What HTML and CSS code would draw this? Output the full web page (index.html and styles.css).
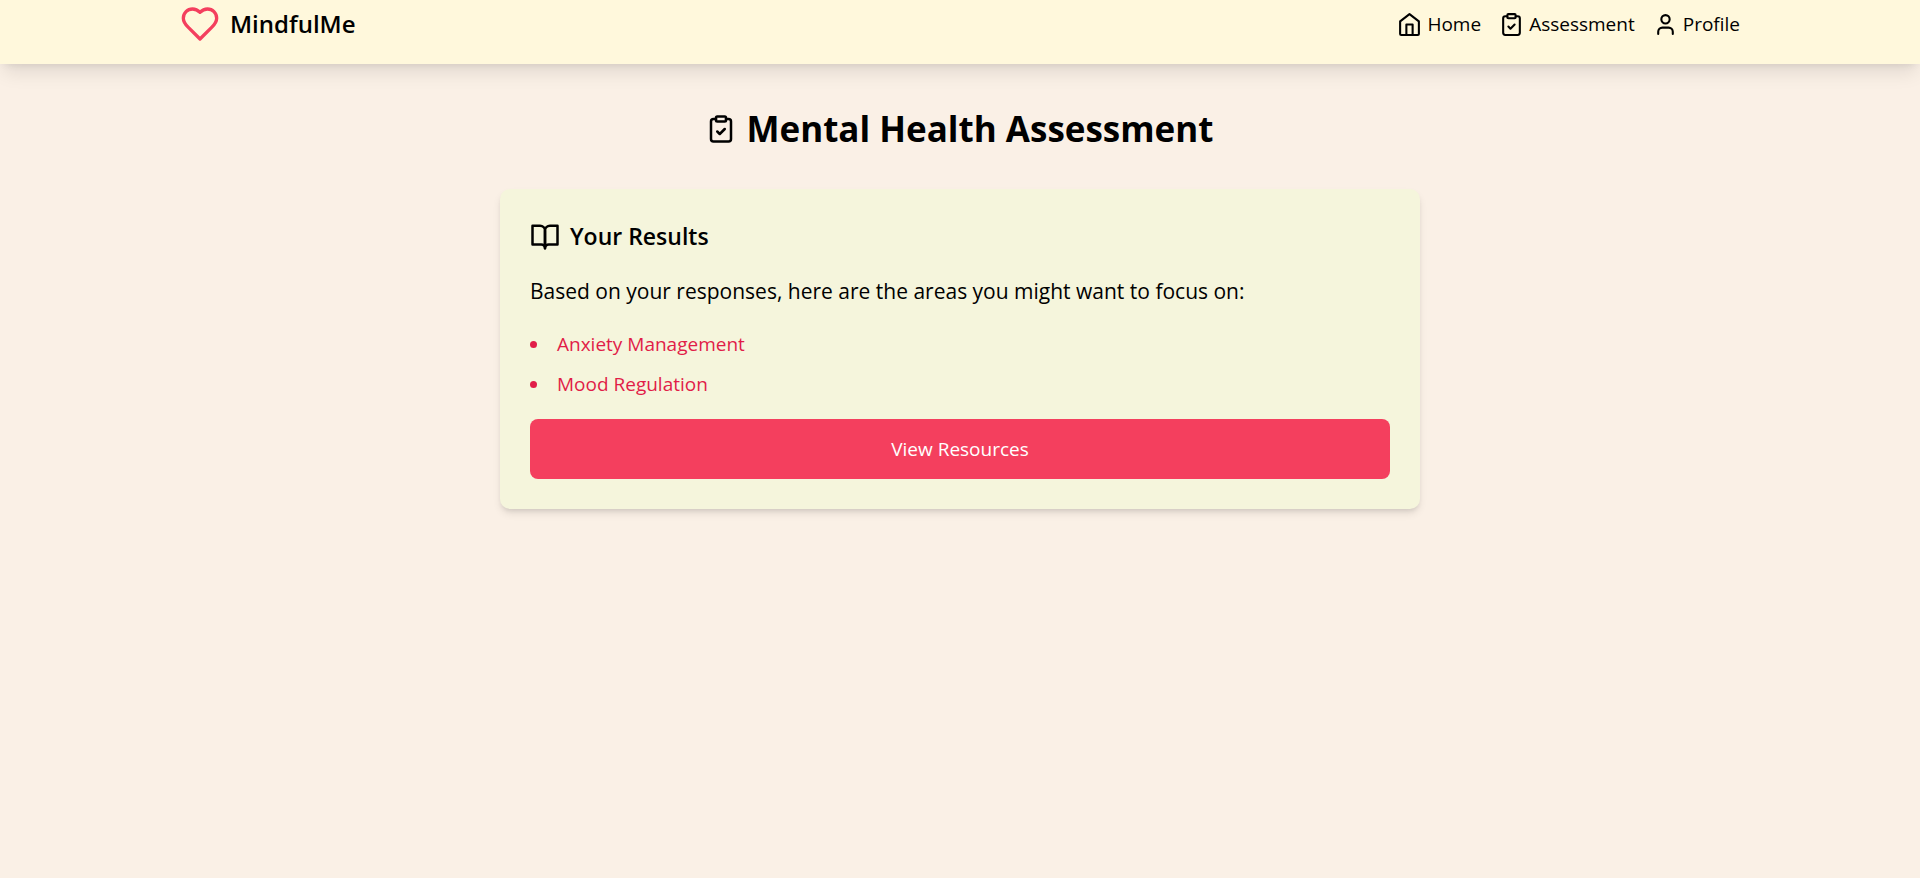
FILE: index.html
```html
<!DOCTYPE html>
<html lang="en">
<head>
<meta charset="utf-8">
<title>MindfulMe</title>
<link rel="stylesheet" href="styles.css">
</head>
<body>
<header class="site-header">
  <div class="container header-row">
    <a class="brand" href="#">
      <svg class="icon icon-brand" viewBox="0 0 24 24" aria-hidden="true"><path d="M19 14c1.49-1.46 3-3.21 3-5.5A5.5 5.5 0 0 0 16.500 3c-1.760 0-3 .5-4.500 2-1.500-1.500-2.740-2-4.500-2A5.500 5.500 0 0 0 2 8.500c0 2.300 1.500 4.050 3 5.500l7 7Z"/></svg>
      <span>MindfulMe</span>
    </a>
    <nav class="nav" aria-label="Main">
      <a class="nav-link" href="#">
        <svg class="icon icon-nav" viewBox="0 0 24 24" aria-hidden="true"><path d="M20 22a1 1 0 0 0 1-1V9l-9-7-9 7v12a1 1 0 0 0 1 1z"/><path d="M9 22V12h6v10"/></svg>
        <span>Home</span>
      </a>
      <a class="nav-link" href="#">
        <svg class="icon icon-nav" viewBox="0 0 24 24" aria-hidden="true"><rect x="8" y="2" width="8" height="4" rx="1"/><path d="M16 4h2a2 2 0 0 1 2 2v14a2 2 0 0 1-2 2H6a2 2 0 0 1-2-2V6a2 2 0 0 1 2-2h2"/><path d="m9 14 2 2 4-4"/></svg>
        <span>Assessment</span>
      </a>
      <a class="nav-link" href="#">
        <svg class="icon icon-nav" viewBox="0 0 24 24" aria-hidden="true"><path d="M19 21v-2a4 4 0 0 0-4-4H9a4 4 0 0 0-4 4v2"/><circle cx="12" cy="7" r="4"/></svg>
        <span>Profile</span>
      </a>
    </nav>
  </div>
</header>
<main class="page">
  <h1 class="page-title">
    <svg class="icon icon-title" viewBox="0 0 24 24" aria-hidden="true"><rect x="8" y="2" width="8" height="4" rx="1"/><path d="M16 4h2a2 2 0 0 1 2 2v14a2 2 0 0 1-2 2H6a2 2 0 0 1-2-2V6a2 2 0 0 1 2-2h2"/><path d="m9 14 2 2 4-4"/></svg>
    <span>Mental Health Assessment</span>
  </h1>
  <section class="card" aria-labelledby="results-title">
    <h2 class="card-title" id="results-title">
      <svg class="icon icon-title" viewBox="0 0 24 24" aria-hidden="true"><path d="M2 3h6a4 4 0 0 1 4 4v14a3 3 0 0 0-3-3H2z"/><path d="M22 3h-6a4 4 0 0 0-4 4v14a3 3 0 0 1 3-3h7z"/></svg>
      <span>Your Results</span>
    </h2>
    <p class="lead">Based on your responses, here are the areas you might want to focus on:</p>
    <ul class="areas">
      <li>Anxiety Management</li>
      <li>Mood Regulation</li>
    </ul>
    <button class="button" type="button">View Resources</button>
  </section>
</main>
</body>
</html>
```
FILE: styles.css
```css
* {
  box-sizing: border-box;
  margin: 0;
  padding: 0;
}

body {
  min-height: 100vh;
  background: #faf0e6;
  color: #000;
  font-family: "Segoe UI", "Open Sans", "Noto Sans", sans-serif;
  font-size: 19px;
  line-height: 30px;
}

.icon {
  flex: none;
  fill: none;
  stroke: currentColor;
  stroke-width: 2;
  stroke-linecap: round;
  stroke-linejoin: round;
}

.icon-brand {
  width: 40px;
  height: 40px;
  color: #f43f5e;
}

.icon-nav {
  width: 25px;
  height: 25px;
}

.icon-title {
  width: 30px;
  height: 30px;
}

.site-header {
  background: #fff8dc;
  box-shadow: 0 12px 19px -4px rgb(0 0 0 / 0.1), 0 5px 8px -5px rgb(0 0 0 / 0.1);
}

.container {
  max-width: 1600px;
  margin: 0 auto;
  padding: 0 20px;
}

.header-row {
  display: flex;
  justify-content: space-between;
  align-items: flex-start;
  padding-top: 4px;
  padding-bottom: 20px;
}

.brand,
.nav,
.nav-link {
  display: flex;
  align-items: center;
}

.brand,
.nav-link {
  color: inherit;
  text-decoration: none;
}

.brand {
  gap: 10px;
  font-size: 24px;
  font-weight: 600;
  line-height: 40px;
}

.nav {
  gap: 18px;
  padding-top: 5px;
}

.nav-link {
  gap: 5px;
}

.page {
  max-width: 960px;
  margin: 0 auto;
  padding: 40px 20px;
}

.page-title {
  display: flex;
  justify-content: center;
  align-items: center;
  gap: 10px;
  margin-bottom: 35px;
  font-size: 35px;
  font-weight: 700;
  line-height: 50px;
}

.card {
  padding: 30px;
  border-radius: 10px;
  background: #f5f5dc;
  box-shadow: 0 5px 8px -1px rgb(0 0 0 / 0.1), 0 3px 5px -2px rgb(0 0 0 / 0.1);
}

.card-title {
  display: flex;
  align-items: center;
  gap: 10px;
  margin-bottom: 20px;
  font-size: 23px;
  font-weight: 600;
  line-height: 35px;
}

.lead {
  margin-bottom: 20px;
  font-size: 21px;
  line-height: 35px;
}

.areas {
  margin-bottom: 20px;
  color: #e11d48;
  list-style: disc inside;
}

.areas li + li {
  margin-top: 10px;
}

.button {
  display: block;
  width: 100%;
  padding: 15px 30px;
  border: 0;
  border-radius: 8px;
  background: #f43f5e;
  color: #fff;
  font: inherit;
  cursor: pointer;
}
```
